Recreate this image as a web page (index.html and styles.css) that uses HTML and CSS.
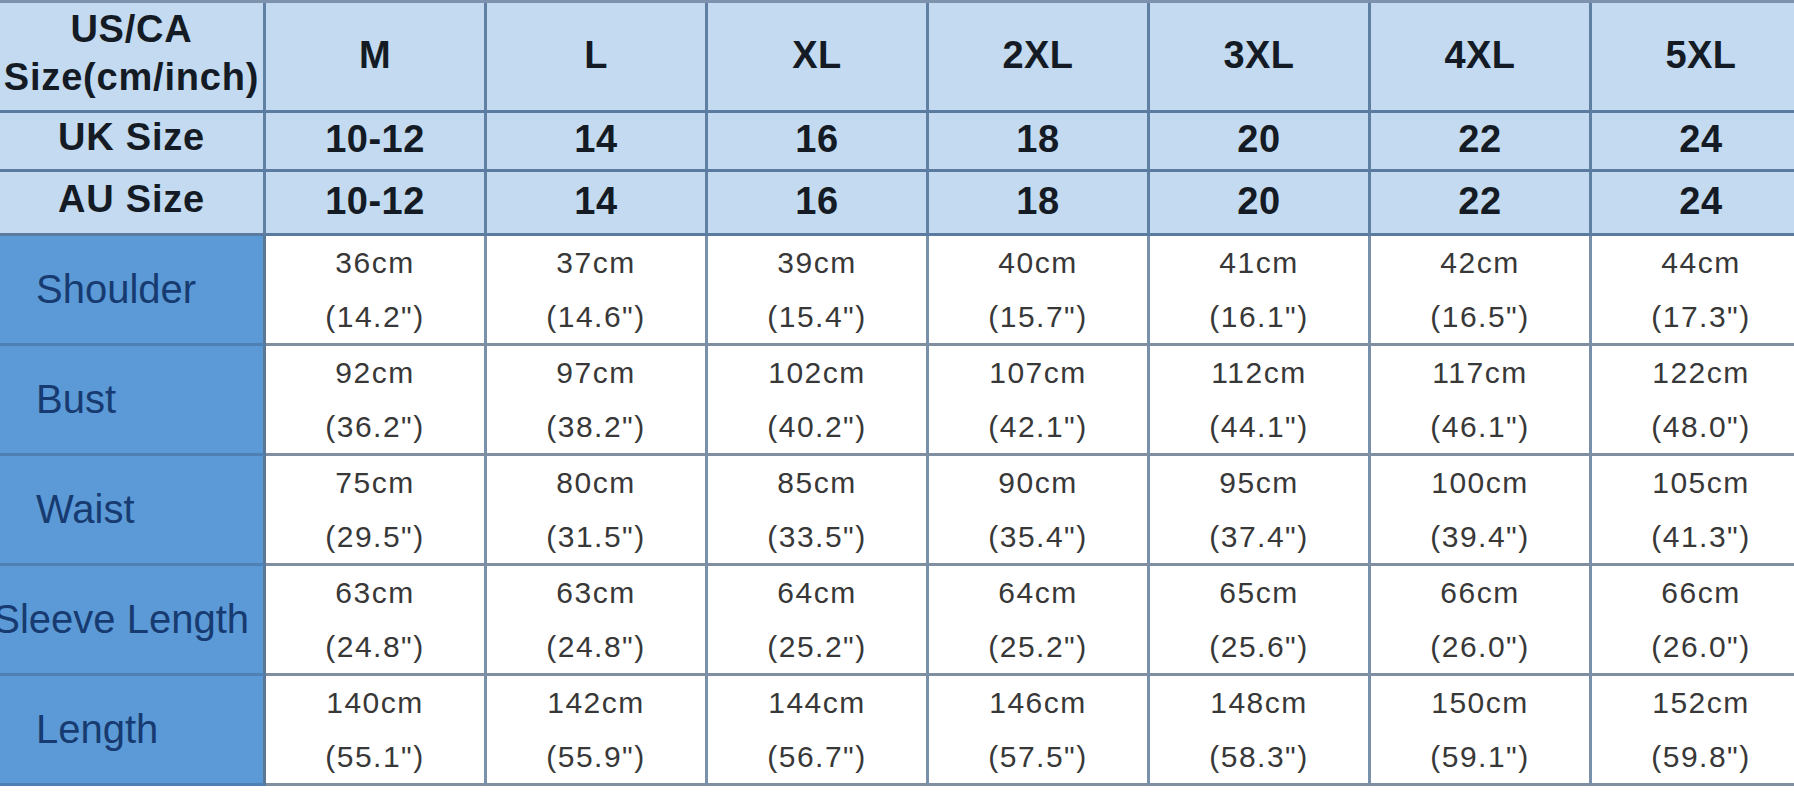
FILE: index.html
```html
<!DOCTYPE html>
<html lang="en">
<head>
<meta charset="utf-8">
<title>Size Chart</title>
<link rel="stylesheet" href="styles.css">
</head>
<body>
<div class="chart">
  <div class="cell head first"><span>US/CA<br>Size(cm/inch)</span></div>
  <div class="cell head">M</div>
  <div class="cell head">L</div>
  <div class="cell head">XL</div>
  <div class="cell head">2XL</div>
  <div class="cell head">3XL</div>
  <div class="cell head">4XL</div>
  <div class="cell head">5XL</div>

  <div class="cell head first">UK Size</div>
  <div class="cell head">10-12</div>
  <div class="cell head">14</div>
  <div class="cell head">16</div>
  <div class="cell head">18</div>
  <div class="cell head">20</div>
  <div class="cell head">22</div>
  <div class="cell head">24</div>

  <div class="cell head first">AU Size</div>
  <div class="cell head">10-12</div>
  <div class="cell head">14</div>
  <div class="cell head">16</div>
  <div class="cell head">18</div>
  <div class="cell head">20</div>
  <div class="cell head">22</div>
  <div class="cell head">24</div>

  <div class="cell label">Shoulder</div>
  <div class="cell data">36cm<br>(14.2")</div>
  <div class="cell data">37cm<br>(14.6")</div>
  <div class="cell data">39cm<br>(15.4")</div>
  <div class="cell data">40cm<br>(15.7")</div>
  <div class="cell data">41cm<br>(16.1")</div>
  <div class="cell data">42cm<br>(16.5")</div>
  <div class="cell data">44cm<br>(17.3")</div>

  <div class="cell label">Bust</div>
  <div class="cell data">92cm<br>(36.2")</div>
  <div class="cell data">97cm<br>(38.2")</div>
  <div class="cell data">102cm<br>(40.2")</div>
  <div class="cell data">107cm<br>(42.1")</div>
  <div class="cell data">112cm<br>(44.1")</div>
  <div class="cell data">117cm<br>(46.1")</div>
  <div class="cell data">122cm<br>(48.0")</div>

  <div class="cell label">Waist</div>
  <div class="cell data">75cm<br>(29.5")</div>
  <div class="cell data">80cm<br>(31.5")</div>
  <div class="cell data">85cm<br>(33.5")</div>
  <div class="cell data">90cm<br>(35.4")</div>
  <div class="cell data">95cm<br>(37.4")</div>
  <div class="cell data">100cm<br>(39.4")</div>
  <div class="cell data">105cm<br>(41.3")</div>

  <div class="cell label wide">Sleeve Length</div>
  <div class="cell data">63cm<br>(24.8")</div>
  <div class="cell data">63cm<br>(24.8")</div>
  <div class="cell data">64cm<br>(25.2")</div>
  <div class="cell data">64cm<br>(25.2")</div>
  <div class="cell data">65cm<br>(25.6")</div>
  <div class="cell data">66cm<br>(26.0")</div>
  <div class="cell data">66cm<br>(26.0")</div>

  <div class="cell label">Length</div>
  <div class="cell data">140cm<br>(55.1")</div>
  <div class="cell data">142cm<br>(55.9")</div>
  <div class="cell data">144cm<br>(56.7")</div>
  <div class="cell data">146cm<br>(57.5")</div>
  <div class="cell data">148cm<br>(58.3")</div>
  <div class="cell data">150cm<br>(59.1")</div>
  <div class="cell data">152cm<br>(59.8")</div>
</div>
</body>
</html>
```

FILE: styles.css
```css
html, body {
  margin: 0;
  padding: 0;
  background: #ffffff;
  overflow: hidden;
}

body {
  width: 1794px;
  height: 800px;
  font-family: "Liberation Sans", Arial, sans-serif;
}

.chart {
  display: grid;
  grid-template-columns: 266px repeat(7, 221px);
  grid-template-rows: 110px 59px 64px repeat(5, 110px);
  width: max-content;
  border-top: 3px solid #7d93ad;
}

.cell {
  box-sizing: border-box;
  border-right: 3px solid #7f95b0;
  border-bottom: 3px solid #6f8aa9;
  display: flex;
  align-items: center;
  justify-content: center;
  text-align: center;
  white-space: nowrap;
  overflow: visible;
}

.head {
  background: #c3daf0;
  color: #141b24;
  font-weight: bold;
  font-size: 38px;
  line-height: 48px;
  letter-spacing: 0.5px;
  border-right-color: #5f7fa3;
  border-bottom-color: #5a7aa0;
  padding-bottom: 4px;
}

.head.first {
  padding-bottom: 8px;
  letter-spacing: 0.8px;
}

.label {
  background: #5b9ad6;
  color: #173a70;
  font-size: 40px;
  justify-content: flex-start;
  padding-left: 36px;
  border-right-color: #5a7896;
  border-bottom-color: #4f80b4;
}

.label.wide {
  justify-content: flex-end;
  padding-left: 0;
  padding-right: 14px;
}

.data {
  background: #ffffff;
  color: #383838;
  font-size: 30px;
  letter-spacing: 1.5px;
  line-height: 54px;
  border-right-color: #7890aa;
  border-bottom-color: #7f8fa0;
}
```
